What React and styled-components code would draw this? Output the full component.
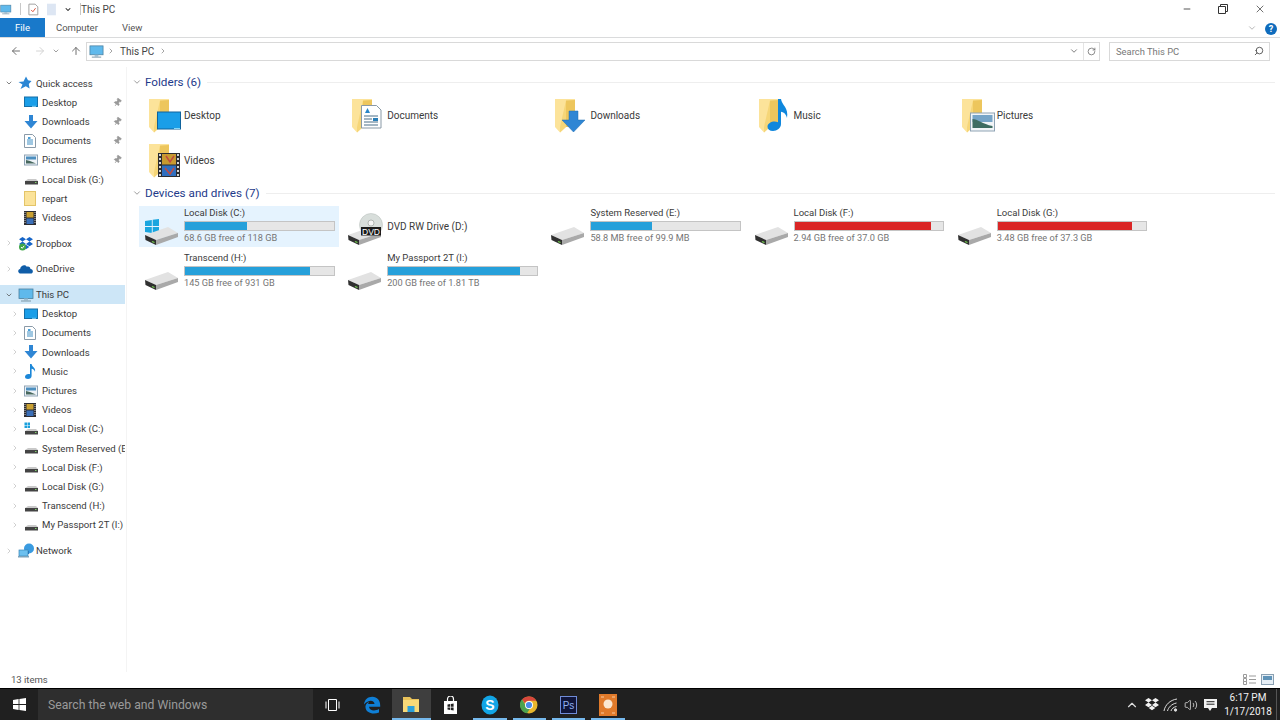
import React from "react";
import styled, { createGlobalStyle } from "styled-components";
import {
  ArrowLeft,
  ArrowRight,
  ArrowUp,
  ChevronDown,
  ChevronRight,
  ChevronUp,
  Minus,
  Pin,
  RotateCw,
  Search,
  Volume2,
  X,
} from "lucide-react";

const GlobalStyle = createGlobalStyle`
  html, body {
    margin: 0;
    padding: 0;
    background: #fff;
    overflow: hidden;
  }
  * {
    box-sizing: border-box;
  }
  #root {
    font-family: Roboto, "Noto Sans", sans-serif;
  }
`;

const Window = styled.div`
  width: 1280px;
  height: 720px;
  display: flex;
  flex-direction: column;
  background: #fff;
  color: #3a3a3a;
  font-size: 10px;
`;

const TitleBar = styled.div`
  height: 18px;
  display: flex;
  align-items: center;
  color: #444;
`;

const QuickTools = styled.div`
  display: flex;
  align-items: center;
  width: 81px;
  gap: 8px;
  flex: none;
`;

const Sep = styled.span`
  width: 1px;
  height: 12px;
  background: #c8c8c8;
`;

const Caption = styled.div`
  margin-left: auto;
  display: flex;
  align-items: center;
  gap: 26px;
  padding-right: 14px;
  color: #333;
  height: 18px;
`;

const Tabs = styled.div`
  height: 20px;
  display: flex;
  align-items: stretch;
  border-bottom: 1px solid #dadbdc;
  padding-right: 3px;
`;

const FileTab = styled.div`
  width: 45px;
  background: #1979ca;
  color: #fff;
  display: flex;
  align-items: center;
  justify-content: center;
  font-size: 9.5px;
`;

const Tab = styled.div`
  margin-left: ${(p) => p.$gap}px;
  display: flex;
  align-items: center;
  font-size: 9.5px;
  color: #555;
`;

const Help = styled.div`
  margin: 2px 0 0 8px;
  width: 12px;
  height: 12px;
  border-radius: 50%;
  background: #0f6cbd;
  color: #fff;
  font-size: 9px;
  font-weight: 700;
  line-height: 12px;
  text-align: center;
`;

const RibbonEnd = styled.div`
  margin-left: auto;
  display: flex;
  align-items: center;
  color: #aaa;
`;

const NavBar = styled.div`
  height: 29px;
  display: flex;
  align-items: center;
  padding: 0 10px 3px 10px;
  color: #777;
`;

const NavButtons = styled.div`
  width: 76px;
  flex: none;
  display: flex;
  align-items: center;
`;

const NavSlot = styled.span`
  display: flex;
  width: ${(p) => p.$w}px;
  color: ${(p) => p.$color || "#707070"};
`;

const Address = styled.div`
  width: 1014px;
  height: 19px;
  border: 1px solid #d9d9d9;
  display: flex;
  align-items: center;
  padding-left: 2px;
  color: #444;
`;

const Crumb = styled.span`
  margin-left: ${(p) => p.$gap}px;
  display: flex;
  align-items: center;
`;

const AddressEnd = styled.div`
  margin-left: auto;
  height: 100%;
  display: flex;
  align-items: center;
  color: #666;
`;

const Refresh = styled.span`
  width: 16px;
  height: 100%;
  margin-left: 4px;
  border-left: 1px solid #e4e4e4;
  display: flex;
  align-items: center;
  justify-content: center;
`;

const SearchBox = styled.div`
  margin-left: 9px;
  flex: 1;
  height: 19px;
  border: 1px solid #d9d9d9;
  display: flex;
  align-items: center;
  justify-content: space-between;
  padding: 0 5px 0 6px;
  color: #777;
  font-size: 9.4px;
`;

const Body = styled.div`
  flex: 1;
  display: flex;
  min-height: 0;
`;

const Sidebar = styled.nav`
  width: 127px;
  flex: none;
  padding-top: 6.6px;
  border-right: 1px solid #f4f4f4;
  font-size: 9.6px;
`;

const NavRow = styled.div`
  height: 19.2px;
  display: flex;
  align-items: center;
  margin-top: ${(p) => (p.$spaced ? 6.5 : 0)}px;
  margin-right: 1px;
  padding-left: ${(p) => (p.$child ? 11 : 5)}px;
  background: ${(p) => (p.$selected ? "#cde6f7" : "transparent")};
  white-space: nowrap;
  overflow: hidden;
`;

const Caret = styled.span`
  width: 8px;
  flex: none;
  display: flex;
  justify-content: center;
  color: ${(p) => (p.$open ? "#444" : "#a6a6a6")};
  visibility: ${(p) => (p.$hidden ? "hidden" : "visible")};
`;

const NavIcon = styled.span`
  width: 23px;
  flex: none;
  padding-left: 5px;
  display: flex;
  align-items: center;
`;

const NavLabel = styled.span`
  flex: 1;
`;

const PinMark = styled.span`
  display: flex;
  margin-right: 3px;
  color: #9a9a9a;
  transform: rotate(35deg);
`;

const Content = styled.main`
  flex: 1;
  padding: 7px 5px 0 0;
`;

const SectionHead = styled.div`
  height: 16px;
  display: flex;
  align-items: center;
  padding-left: 5px;
  margin-top: ${(p) => p.$top}px;
  color: #1e3a8a;
  font-size: 11.7px;
  white-space: nowrap;
  svg {
    margin-right: 3px;
    color: #8a8a8a;
  }
  &::after {
    content: "";
    flex: 1;
    height: 1px;
    margin-left: 6px;
    background: #eeeeee;
  }
`;

const TileGrid = styled.div`
  display: grid;
  grid-template-columns: repeat(5, 200px);
  column-gap: 3.2px;
  row-gap: 4px;
  padding: 5px 0 0 12px;
`;

const Tile = styled.div`
  height: 41px;
  display: flex;
  align-items: center;
  background: ${(p) => (p.$hot ? "#e5f3fe" : "transparent")};
`;

const TileIcon = styled.div`
  width: 45px;
  padding-left: ${(p) => p.$pad}px;
  flex: none;
  display: flex;
`;

const TileText = styled.div`
  width: 150.5px;
  align-self: flex-start;
  display: flex;
  flex-direction: column;
`;

const DriveName = styled.div`
  line-height: 14px;
  font-size: 9.5px;
`;

const Usage = styled.div`
  height: 10px;
  margin-top: 1px;
  background: #e6e6e6;
  border: 1px solid #c4c4c4;
`;

const UsageFill = styled.div`
  height: 100%;
  background: ${(p) => (p.$full ? "#da2626" : "#26a0da")};
`;

const DriveFree = styled.div`
  line-height: 14px;
  font-size: 9.2px;
  color: #757575;
`;

const StatusBar = styled.div`
  height: 16px;
  display: flex;
  align-items: center;
  justify-content: space-between;
  padding: 0 6px 1px 11px;
  color: #555;
  font-size: 9.5px;
`;

const ViewToggle = styled.div`
  display: flex;
  gap: 5px;
  align-items: center;
`;

const Taskbar = styled.footer`
  height: 32px;
  background: #202020;
  border-top: 1px solid #000;
  display: flex;
  align-items: stretch;
  color: #fff;
`;

const StartButton = styled.div`
  width: 38px;
  display: flex;
  align-items: center;
  justify-content: center;
`;

const SearchWeb = styled.div`
  width: 275px;
  background: #2e2e2e;
  display: flex;
  align-items: center;
  padding-left: 10px;
  color: #9a9a9a;
  font-size: 12.2px;
`;

const TaskApps = styled.div`
  display: flex;
`;

const TaskApp = styled.div`
  width: 39.3px;
  display: flex;
  align-items: center;
  justify-content: center;
  position: relative;
  background: ${(p) => (p.$active ? "#3e3e3e" : "transparent")};
  &::after {
    content: "";
    display: ${(p) => (p.$running ? "block" : "none")};
    position: absolute;
    left: ${(p) => (p.$active ? 0 : 3)}px;
    right: ${(p) => (p.$active ? 0 : 3)}px;
    bottom: 0;
    height: 2px;
    background: #76b9ed;
  }
`;

const TaskView = styled.div`
  width: 39.5px;
  display: flex;
  align-items: center;
  justify-content: center;
`;

const Tray = styled.div`
  margin-left: auto;
  display: flex;
  align-items: center;
`;

const TrayIcon = styled.span`
  width: 19.5px;
  display: flex;
  justify-content: center;
`;

const Clock = styled.div`
  width: 56px;
  text-align: center;
  font-size: 10px;
  line-height: 14px;
  color: #f2f2f2;
`;

const DesktopEdge = styled.div`
  width: 1px;
  height: 100%;
  margin: 0 3px 0 0;
  background: #555;
`;

/* drawings */

const PcIcon = ({ size = 16 }) => (
  <svg width={size} height={size} viewBox="0 0 16 16">
    <rect x="1" y="2" width="14" height="9.5" fill="#5fb9ec" stroke="#4a7f9f" strokeWidth="0.8" />
    <rect x="6" y="11.5" width="4" height="2" fill="#9fc0d4" />
    <rect x="3" y="13.4" width="10" height="1.2" fill="#8aa4b4" />
  </svg>
);

const DesktopSmall = () => (
  <svg width="14" height="12" viewBox="0 0 14 12">
    <rect x="0.5" y="1" width="13" height="9.5" fill="#1a9ee8" stroke="#146fa8" />
    <rect x="8" y="9.8" width="4" height="1" fill="#7fd0f5" />
  </svg>
);

const DownloadSmall = () => (
  <svg width="14" height="14" viewBox="0 0 14 14">
    <path d="M5 0h4v6h4.5L7 13.5.5 6H5z" fill="#2f86d4" />
  </svg>
);

const DocSmall = () => (
  <svg width="12" height="14" viewBox="0 0 12 14">
    <path d="M.5.5h8l3 3v10H.5z" fill="#fff" stroke="#8a9aa8" />
    <path d="M3 6h6M3 8h6M3 10h6" stroke="#3f8fc4" strokeWidth="1" />
    <rect x="4" y="3" width="2.5" height="2" fill="#4aa0d8" />
  </svg>
);

const PictureSmall = () => (
  <svg width="14" height="12" viewBox="0 0 14 12">
    <rect x="0.5" y="1" width="13" height="10" fill="#eef3f8" stroke="#8fa3b4" />
    <rect x="2" y="2.5" width="10" height="3" fill="#4d8fbf" />
    <path d="M2 9.5V6l4 1 6 2.5z" fill="#47685e" />
  </svg>
);

const FilmSmall = () => (
  <svg width="12" height="14" viewBox="0 0 12 14">
    <rect width="12" height="14" fill="#2c2c30" />
    <rect x="2.5" y="1" width="7" height="5.5" fill="#c9a032" />
    <rect x="2.5" y="7.5" width="7" height="5.5" fill="#3a6fb8" />
    <path d="M1 1v12M11 1v12" stroke="#cfcfcf" strokeWidth="1" strokeDasharray="1 1" />
  </svg>
);

const MusicSmall = () => (
  <svg width="13" height="15" viewBox="0 0 13 15">
    <path d="M6 0h1.6c.3 3 4.4 3.6 3.4 8-.2-2-2-3-3.4-3.2V12c0 1.7-1.7 3-3.6 3S1 14 1 12.7s1.700-2.700 3.500-2.700c.6 0 1.100.1 1.500.3z" fill="#1c87d8" />
  </svg>
);

const FolderSmall = () => (
  <svg width="12" height="15" viewBox="0 0 12 15">
    <rect x="0.5" y="0.5" width="11" height="14" fill="#fbe39a" stroke="#e3c468" />
  </svg>
);

const DriveSmall = ({ win }) => (
  <svg width="14" height="14" viewBox="0 0 14 14">
    {win && (
      <g fill="#1aa0dc">
        <rect x="0.5" y="0.5" width="2.500" height="2.500" />
        <rect x="3.5" y="0.5" width="2.500" height="2.500" />
        <rect x="0.5" y="3.500" width="2.500" height="2.500" />
        <rect x="3.5" y="3.500" width="2.500" height="2.500" />
      </g>
    )}
    <path d="M1 9l3-2h8l2 2z" fill="#c9c9c9" />
    <rect x="1" y="9" width="13" height="3.500" fill="#444" />
    <rect x="11" y="10" width="1.500" height="1" fill="#7fd06a" />
  </svg>
);

const QuickStar = () => (
  <svg width="14" height="14" viewBox="0 0 14 14">
    <path d="M8 .5l2 3.800 3.500.6-2.700 3 .8 4.600-3.800-2.200L2.500 13l2-4.500L.5 6l5-.5z" fill="#2a86d4" />
  </svg>
);

const DropboxIcon = ({ color = "#1665c8", check }) => (
  <svg width="16" height="15" viewBox="0 0 16 15">
    <path d="M4.500 1L8 3.300 4.500 5.600 1 3.300zM11.500 1L15 3.300l-3.500 2.300L8 3.300zM4.500 5.600L8 7.900l-3.500 2.300L1 7.900zM11.500 5.600L15 7.900l-3.500 2.300L8 7.900zM4.700 11L8 8.800l3.300 2.200L8 13.200z" fill={color} />
    {check && <circle cx="4.500" cy="11" r="3.500" fill="#3fa648" />}
    {check && <path d="M3 11l1.200 1.300L6.200 9.800" stroke="#fff" strokeWidth="1" fill="none" />}
  </svg>
);

const CloudIcon = () => (
  <svg width="15" height="11" viewBox="0 0 15 11">
    <path d="M3 10.500c-3.500 0-3.600-4-.9-4.600C2.800 2.600 6.800 1 8.800 3.700c2.200-.9 3.700.8 3.700 2.400 3 .1 3.300 4.400 0 4.400z" fill="#0f5da8" />
  </svg>
);

const NetworkIcon = () => (
  <svg width="17" height="15" viewBox="0 0 17 15">
    <circle cx="11" cy="5.500" r="5" fill="#3a9be0" />
    <path d="M7 8h4v3H7z" fill="#1f6fb8" />
    <rect x="1" y="7" width="9" height="6" fill="#6cc0ef" stroke="#3a86b8" strokeWidth="0.7" />
    <rect x="0" y="13" width="11" height="1.500" fill="#7ba2bb" />
  </svg>
);

const Folder = ({ children }) => (
  <svg width="34" height="35" viewBox="0 0 34 35">
    <path d="M3 1h18v28H5z" fill="#edc65d" />
    <path d="M1 1h14l6 0v1L12 2.500l0 26.500-6 5.500L1 29z" fill="#fce39a" />
    <path d="M12 2.500v26.500l-6 5.500V29z" fill="#f6d678" />
    {children}
  </svg>
);

const overlays = {
  desktop: (
    <g>
      <rect x="9.500" y="14" width="23" height="17" fill="#1a9ee8" stroke="#10639c" />
      <rect x="26" y="30" width="6" height="1" fill="#86d7f7" />
    </g>
  ),
  documents: (
    <g>
      <path d="M10.500 7.500h15l4.500 4.500v18H10.500z" fill="#fff" stroke="#8999a6" />
      <path d="M13 18h14M13 21h8M13 24h14M13 27h14" stroke="#4a6f88" />
      <path d="M14 15l2.500-5 2.500 5z" fill="#2a86c8" />
      <rect x="22" y="20" width="5" height="3" fill="#2a7fb8" />
    </g>
  ),
  downloads: <path d="M15 13h9v9h7L19.500 34 8 22h7z" fill="#2f86d4" stroke="#1e6cb2" strokeWidth="0.5" />,
  music: (
    <path d="M20 1h3c.6 6 8 8.500 6 19-1-4.500-3.700-6-6-6.300V26c0 4-4 7-8 7-3.500 0-5.500-1.800-5.500-4.300 0-3.200 3.700-5.200 7-5.200 1.300 0 2.500.3 3.500.8z" fill="#0f87dd" />
  ),
  pictures: (
    <g>
      <rect x="9.500" y="15" width="24" height="18" fill="#f2f5f8" stroke="#8fa3b4" />
      <rect x="11.500" y="17" width="20" height="7" fill="#77a5c8" />
      <path d="M11.500 30v-9c5 0 10 5 20 7v2z" fill="#3f6d62" />
    </g>
  ),
  videos: (
    <g>
      <rect x="10" y="10" width="22" height="24" fill="#2c2c30" />
      <rect x="14" y="11" width="14" height="10.500" fill="#c89a30" />
      <rect x="14" y="22.500" width="14" height="10.500" fill="#2f6fc0" />
      <path d="M18 13l4 6 4-6M17 25l5 6 4-6" stroke="#c24a40" strokeWidth="1.500" fill="none" />
      <path d="M12 11v22M30 11v22" stroke="#d6d6d6" strokeWidth="2" strokeDasharray="2 2" />
    </g>
  ),
};

const DriveBig = ({ win, dvd }) => (
  <svg width="36" height="38" viewBox="0 0 36 38">
    {win && (
      <g fill="#19a5df" transform="translate(0 6.500)">
        <path d="M1 6.500l6.800-1v6H1zM8.700 5.300L15 4.400v7.100H8.700zM1 12.500h6.800v6L1 17.500zM8.700 12.500H15v7.100l-6.300-1z" />
      </g>
    )}
    {dvd && (
      <g>
        <circle cx="24" cy="17" r="11.500" fill="#d8dedb" stroke="#b5bcb8" strokeWidth="0.5" />
        <circle cx="24" cy="15" r="3" fill="#f5f5f5" stroke="#9aa09c" strokeWidth="0.7" />
      </g>
    )}
    <path d="M1 27l23-8 10 6-22 7z" fill="#e2e2e2" />
    <path d="M12 32l22-7v4l-22 8z" fill="#a9a9a9" />
    <path d="M1 27l11 5v5L1.500 32z" fill="#303030" />
    <path d="M8 33.500l2.500 1" stroke="#74d04f" strokeWidth="1.200" />
    {dvd && <rect x="14" y="19" width="20" height="8.500" fill="#1b1b1b" />}
    {dvd && (
      <text x="24" y="26.500" textAnchor="middle" fontSize="8.500" fontFamily="Liberation Sans, sans-serif" fill="#fff">
        DVD
      </text>
    )}
  </svg>
);

const WindowsLogo = ({ size = 13, color = "#fff" }) => (
  <svg width={size} height={size} viewBox="0 0 13 13" fill={color}>
    <path d="M0 1.900L5.600 1v5.100H0zM6.400.9L13 0v6.100H6.400zM0 6.900h5.600V12L0 11.100zM6.400 6.900H13V13l-6.600-.9z" />
  </svg>
);

const EdgeLogo = () => (
  <svg width="18" height="18" viewBox="0 0 18 18">
    <path d="M1 8.500C1.500 3.500 5 .8 9.300.8c5 0 7.900 3.500 7.900 8.700v1.300H6c.3 3.500 5.200 5 10 2.200v3.600C10 19 1.800 17 2.500 10c.5-2 2-3.500 3.700-4C5 7 5 8 5.500 8h6c0-4-6-5-10.500.5z" fill="#0f7fd6" />
  </svg>
);

const ExplorerLogo = () => (
  <svg width="18" height="17" viewBox="0 0 18 17">
    <path d="M1 1h7l2 2h7v2H1z" fill="#e8c25a" />
    <rect x="1" y="4" width="16" height="12" fill="#f8d978" />
    <rect x="5.500" y="10" width="7" height="6" fill="#2aa0dc" />
  </svg>
);

const StoreLogo = () => (
  <svg width="15" height="18" viewBox="0 0 15 18">
    <path d="M1 5h13v13H1z" fill="#fff" />
    <path d="M4.500 5V3a3 3 0 0 1 6 0v2" fill="none" stroke="#fff" strokeWidth="1.200" />
    <path d="M4.500 8.500l2.700-.4v2.600H4.500zM7.900 8l2.700-.4v3.100H7.900zM4.500 11.400h2.700V14l-2.700-.4zM7.900 11.400h2.700v3l-2.700-.4z" fill="#202020" />
  </svg>
);

const SkypeLogo = () => (
  <svg width="18" height="20" viewBox="0 0 18 20">
    <ellipse cx="9" cy="10" rx="8.500" ry="9.500" fill="#12a5e6" />
    <text x="9" y="15" textAnchor="middle" fontSize="14" fontWeight="700" fontFamily="Liberation Sans, sans-serif" fill="#fff">
      S
    </text>
  </svg>
);

const ChromeLogo = () => (
  <svg width="18" height="18" viewBox="0 0 18 18">
    <circle cx="9" cy="9" r="8.500" fill="#e8b62d" />
    <path d="M9 .5a8.500 8.500 0 0 1 7.400 4.300H9a4.200 4.200 0 0 0-4 2.800L2 3.300A8.500 8.500 0 0 1 9 .5z" fill="#d8473c" />
    <path d="M2 3.300l3.700 6.400a4.200 4.200 0 0 0 4 3.400L7 17.300A8.500 8.500 0 0 1 2 3.300z" fill="#4da24f" />
    <circle cx="9" cy="9" r="4" fill="#fff" />
    <circle cx="9" cy="9" r="3.100" fill="#4b8ce8" />
  </svg>
);

const PsLogo = () => (
  <svg width="17" height="18" viewBox="0 0 17 18">
    <rect x="0.500" y="0.500" width="16" height="17" fill="#10153a" stroke="#6f8bd8" />
    <text x="8.500" y="13" textAnchor="middle" fontSize="10" fontFamily="Liberation Sans, sans-serif" fill="#8fb0f0">
      Ps
    </text>
  </svg>
);

const OrangeApp = () => (
  <svg width="18" height="22" viewBox="0 0 18 22">
    <rect width="18" height="22" fill="#e07a2a" />
    <circle cx="9" cy="10" r="4.500" fill="#fbe7d0" />
    <path d="M2 3h3M13 3h3M2 19h3M13 19h3" stroke="#f8c9a0" strokeWidth="1" />
  </svg>
);

const WifiTray = () => (
  <svg width="16" height="14" viewBox="0 0 16 14" fill="none" stroke="#ddd" strokeWidth="1">
    <path d="M1 13C2 7 7 2 14 1M4.500 13c.8-3.500 4-7 9-8M8 13c.5-2 2.500-4 5.500-4.500" />
    <circle cx="12.500" cy="12" r="1.200" fill="#ddd" />
  </svg>
);

const NoteTray = () => (
  <svg width="15" height="14" viewBox="0 0 15 14">
    <path d="M1 1h13v9H9l-2 3-2-3H1z" fill="#f2f2f2" />
    <path d="M3.500 3.700h8M3.500 6.200h8" stroke="#202020" />
  </svg>
);

const navIcons = {
  desktop: <DesktopSmall />,
  downloads: <DownloadSmall />,
  documents: <DocSmall />,
  pictures: <PictureSmall />,
  videos: <FilmSmall />,
  music: <MusicSmall />,
  folder: <FolderSmall />,
  drive: <DriveSmall />,
  windrive: <DriveSmall win />,
  star: <QuickStar />,
  dropbox: <DropboxIcon check />,
  cloud: <CloudIcon />,
  pc: <PcIcon />,
  network: <NetworkIcon />,
};

const quickItems = [
  ["Desktop", "desktop", true],
  ["Downloads", "downloads", true],
  ["Documents", "documents", true],
  ["Pictures", "pictures", true],
  ["Local Disk (G:)", "drive"],
  ["repart", "folder"],
  ["Videos", "videos"],
];

const pcItems = [
  ["Desktop", "desktop"],
  ["Documents", "documents"],
  ["Downloads", "downloads"],
  ["Music", "music"],
  ["Pictures", "pictures"],
  ["Videos", "videos"],
  ["Local Disk (C:)", "windrive"],
  ["System Reserved (E:)", "drive"],
  ["Local Disk (F:)", "drive"],
  ["Local Disk (G:)", "drive"],
  ["Transcend (H:)", "drive"],
  ["My Passport 2T (I:)", "drive"],
];

const folders = [
  ["Desktop", "desktop"],
  ["Documents", "documents"],
  ["Downloads", "downloads"],
  ["Music", "music"],
  ["Pictures", "pictures"],
  ["Videos", "videos"],
];

const drives = [
  { name: "Local Disk (C:)", free: "68.6 GB free of 118 GB", used: 41.9, win: true, hot: true },
  { name: "DVD RW Drive (D:)", dvd: true },
  { name: "System Reserved (E:)", free: "58.8 MB free of 99.9 MB", used: 41 },
  { name: "Local Disk (F:)", free: "2.94 GB free of 37.0 GB", used: 92, full: true },
  { name: "Local Disk (G:)", free: "3.48 GB free of 37.3 GB", used: 90.7, full: true },
  { name: "Transcend (H:)", free: "145 GB free of 931 GB", used: 84.4 },
  { name: "My Passport 2T (I:)", free: "200 GB free of 1.81 TB", used: 89 },
];

const SideRow = ({ label, icon, pin, child, open, spaced, selected, noCaret }) => (
  <NavRow $child={child} $spaced={spaced} $selected={selected}>
    <Caret $open={open} $hidden={noCaret}>
      {open ? <ChevronDown size={12} strokeWidth={2} /> : <ChevronRight size={12} strokeWidth={1.6} />}
    </Caret>
    <NavIcon>{navIcons[icon]}</NavIcon>
    <NavLabel>{label}</NavLabel>
    {pin && (
      <PinMark>
        <Pin size={9} fill="currentColor" />
      </PinMark>
    )}
  </NavRow>
);

export default function App() {
  return (
    <Window>
      <GlobalStyle />
      <TitleBar>
        <QuickTools>
          <PcIcon size={13} />
          <Sep />
          <svg width="12" height="13" viewBox="0 0 12 13">
            <path d="M1 .5h7l3 3v9H1z" fill="#fff" stroke="#999" />
            <path d="M3.500 7l2 2 3-4" stroke="#d8452c" fill="none" />
          </svg>
          <svg width="10" height="13" viewBox="0 0 10 13">
            <rect width="10" height="13" fill="#dde6f3" />
          </svg>
          <ChevronDown size={9} strokeWidth={3} color="#222" />
          <Sep />
        </QuickTools>
        This PC
        <Caption>
          <Minus size={10} />
          <svg width="10" height="10" viewBox="0 0 10 10" fill="none" stroke="#333">
            <path d="M.5 2.500h7v7h-7zM2.500 2.500v-2h7v7h-2" />
          </svg>
          <X size={12} strokeWidth={1.4} />
        </Caption>
      </TitleBar>
      <Tabs>
        <FileTab>File</FileTab>
        <Tab $gap={11}>Computer</Tab>
        <Tab $gap={24}>View</Tab>
        <RibbonEnd>
          <ChevronDown size={10} />
          <Help>?</Help>
        </RibbonEnd>
      </Tabs>
      <NavBar>
        <NavButtons>
          <NavSlot $w={24}>
            <ArrowLeft size={12} />
          </NavSlot>
          <NavSlot $w={18} $color="#d4d4d4">
            <ArrowRight size={12} />
          </NavSlot>
          <NavSlot $w={18}>
            <ChevronDown size={8} />
          </NavSlot>
          <NavSlot $w={16}>
            <ArrowUp size={12} />
          </NavSlot>
        </NavButtons>
        <Address>
          <PcIcon size={15} />
          <Crumb $gap={3}>
            <ChevronRight size={8} color="#777" />
          </Crumb>
          <Crumb $gap={5}>This PC</Crumb>
          <Crumb $gap={5}>
            <ChevronRight size={8} color="#777" />
          </Crumb>
          <AddressEnd>
            <ChevronDown size={10} />
            <Refresh>
              <RotateCw size={9} />
            </Refresh>
          </AddressEnd>
        </Address>
        <SearchBox>
          Search This PC
          <Search size={10} style={{ transform: "scaleX(-1)" }} color="#444" />
        </SearchBox>
      </NavBar>
      <Body>
        <Sidebar>
          <SideRow label="Quick access" icon="star" open />
          {quickItems.map(([label, icon, pin]) => (
            <SideRow key={label} label={label} icon={icon} pin={pin} child noCaret />
          ))}
          <SideRow label="Dropbox" icon="dropbox" spaced />
          <SideRow label="OneDrive" icon="cloud" spaced />
          <SideRow label="This PC" icon="pc" open spaced selected />
          {pcItems.map(([label, icon]) => (
            <SideRow key={label} label={label} icon={icon} child />
          ))}
          <SideRow label="Network" icon="network" spaced />
        </Sidebar>
        <Content>
          <SectionHead $top={0}>
            <ChevronDown size={10} />
            Folders (6)
          </SectionHead>
          <TileGrid>
            {folders.map(([label, kind]) => (
              <Tile key={label}>
                <TileIcon $pad={9}>
                  <Folder>{overlays[kind]}</Folder>
                </TileIcon>
                {label}
              </Tile>
            ))}
          </TileGrid>
          <SectionHead $top={4}>
            <ChevronDown size={10} />
            Devices and drives (7)
          </SectionHead>
          <TileGrid>
            {drives.map((drive) => (
              <Tile key={drive.name} $hot={drive.hot}>
                <TileIcon $pad={5}>
                  <DriveBig win={drive.win} dvd={drive.dvd} />
                </TileIcon>
                {drive.free ? (
                  <TileText>
                    <DriveName>{drive.name}</DriveName>
                    <Usage>
                      <UsageFill $full={drive.full} style={{ width: `${drive.used}%` }} />
                    </Usage>
                    <DriveFree>{drive.free}</DriveFree>
                  </TileText>
                ) : (
                  drive.name
                )}
              </Tile>
            ))}
          </TileGrid>
        </Content>
      </Body>
      <StatusBar>
        13 items
        <ViewToggle>
          <svg width="13" height="11" viewBox="0 0 13 11" fill="none" stroke="#9a9a9a">
            <path d="M.5.5h3v3h-3zM.5 4.500h3v3h-3zM.5 7.500h3v3h-3zM6 2h7M6 5.500h7M6 9h7" />
          </svg>
          <svg width="13" height="11" viewBox="0 0 13 11">
            <rect x="0.500" y="0.500" width="12" height="10" fill="#e6eef5" stroke="#8aa0b2" />
            <rect x="2" y="2" width="9" height="4" fill="#5f93b8" />
          </svg>
        </ViewToggle>
      </StatusBar>
      <Taskbar>
        <StartButton>
          <WindowsLogo />
        </StartButton>
        <SearchWeb>Search the web and Windows</SearchWeb>
        <TaskApps>
          <TaskView>
            <svg width="15" height="14" viewBox="0 0 15 14" fill="none" stroke="#fff">
              <path d="M3.500 1.500h8v11h-8zM1 3.500v7M14 3.500v7" />
            </svg>
          </TaskView>
          <TaskApp>
            <EdgeLogo />
          </TaskApp>
          <TaskApp $active $running>
            <ExplorerLogo />
          </TaskApp>
          <TaskApp>
            <StoreLogo />
          </TaskApp>
          <TaskApp $running>
            <SkypeLogo />
          </TaskApp>
          <TaskApp $running>
            <ChromeLogo />
          </TaskApp>
          <TaskApp $running>
            <PsLogo />
          </TaskApp>
          <TaskApp $running>
            <OrangeApp />
          </TaskApp>
        </TaskApps>
        <Tray>
          <TrayIcon>
            <ChevronUp size={14} color="#ddd" />
          </TrayIcon>
          <TrayIcon>
            <DropboxIcon color="#f2f2f2" />
          </TrayIcon>
          <TrayIcon>
            <WifiTray />
          </TrayIcon>
          <TrayIcon>
            <Volume2 size={14} color="#ddd" strokeWidth={1.4} />
          </TrayIcon>
          <TrayIcon>
            <NoteTray />
          </TrayIcon>
          <Clock>
            6:17 PM
            <br />
            1/17/2018
          </Clock>
          <DesktopEdge />
        </Tray>
      </Taskbar>
    </Window>
  );
}
